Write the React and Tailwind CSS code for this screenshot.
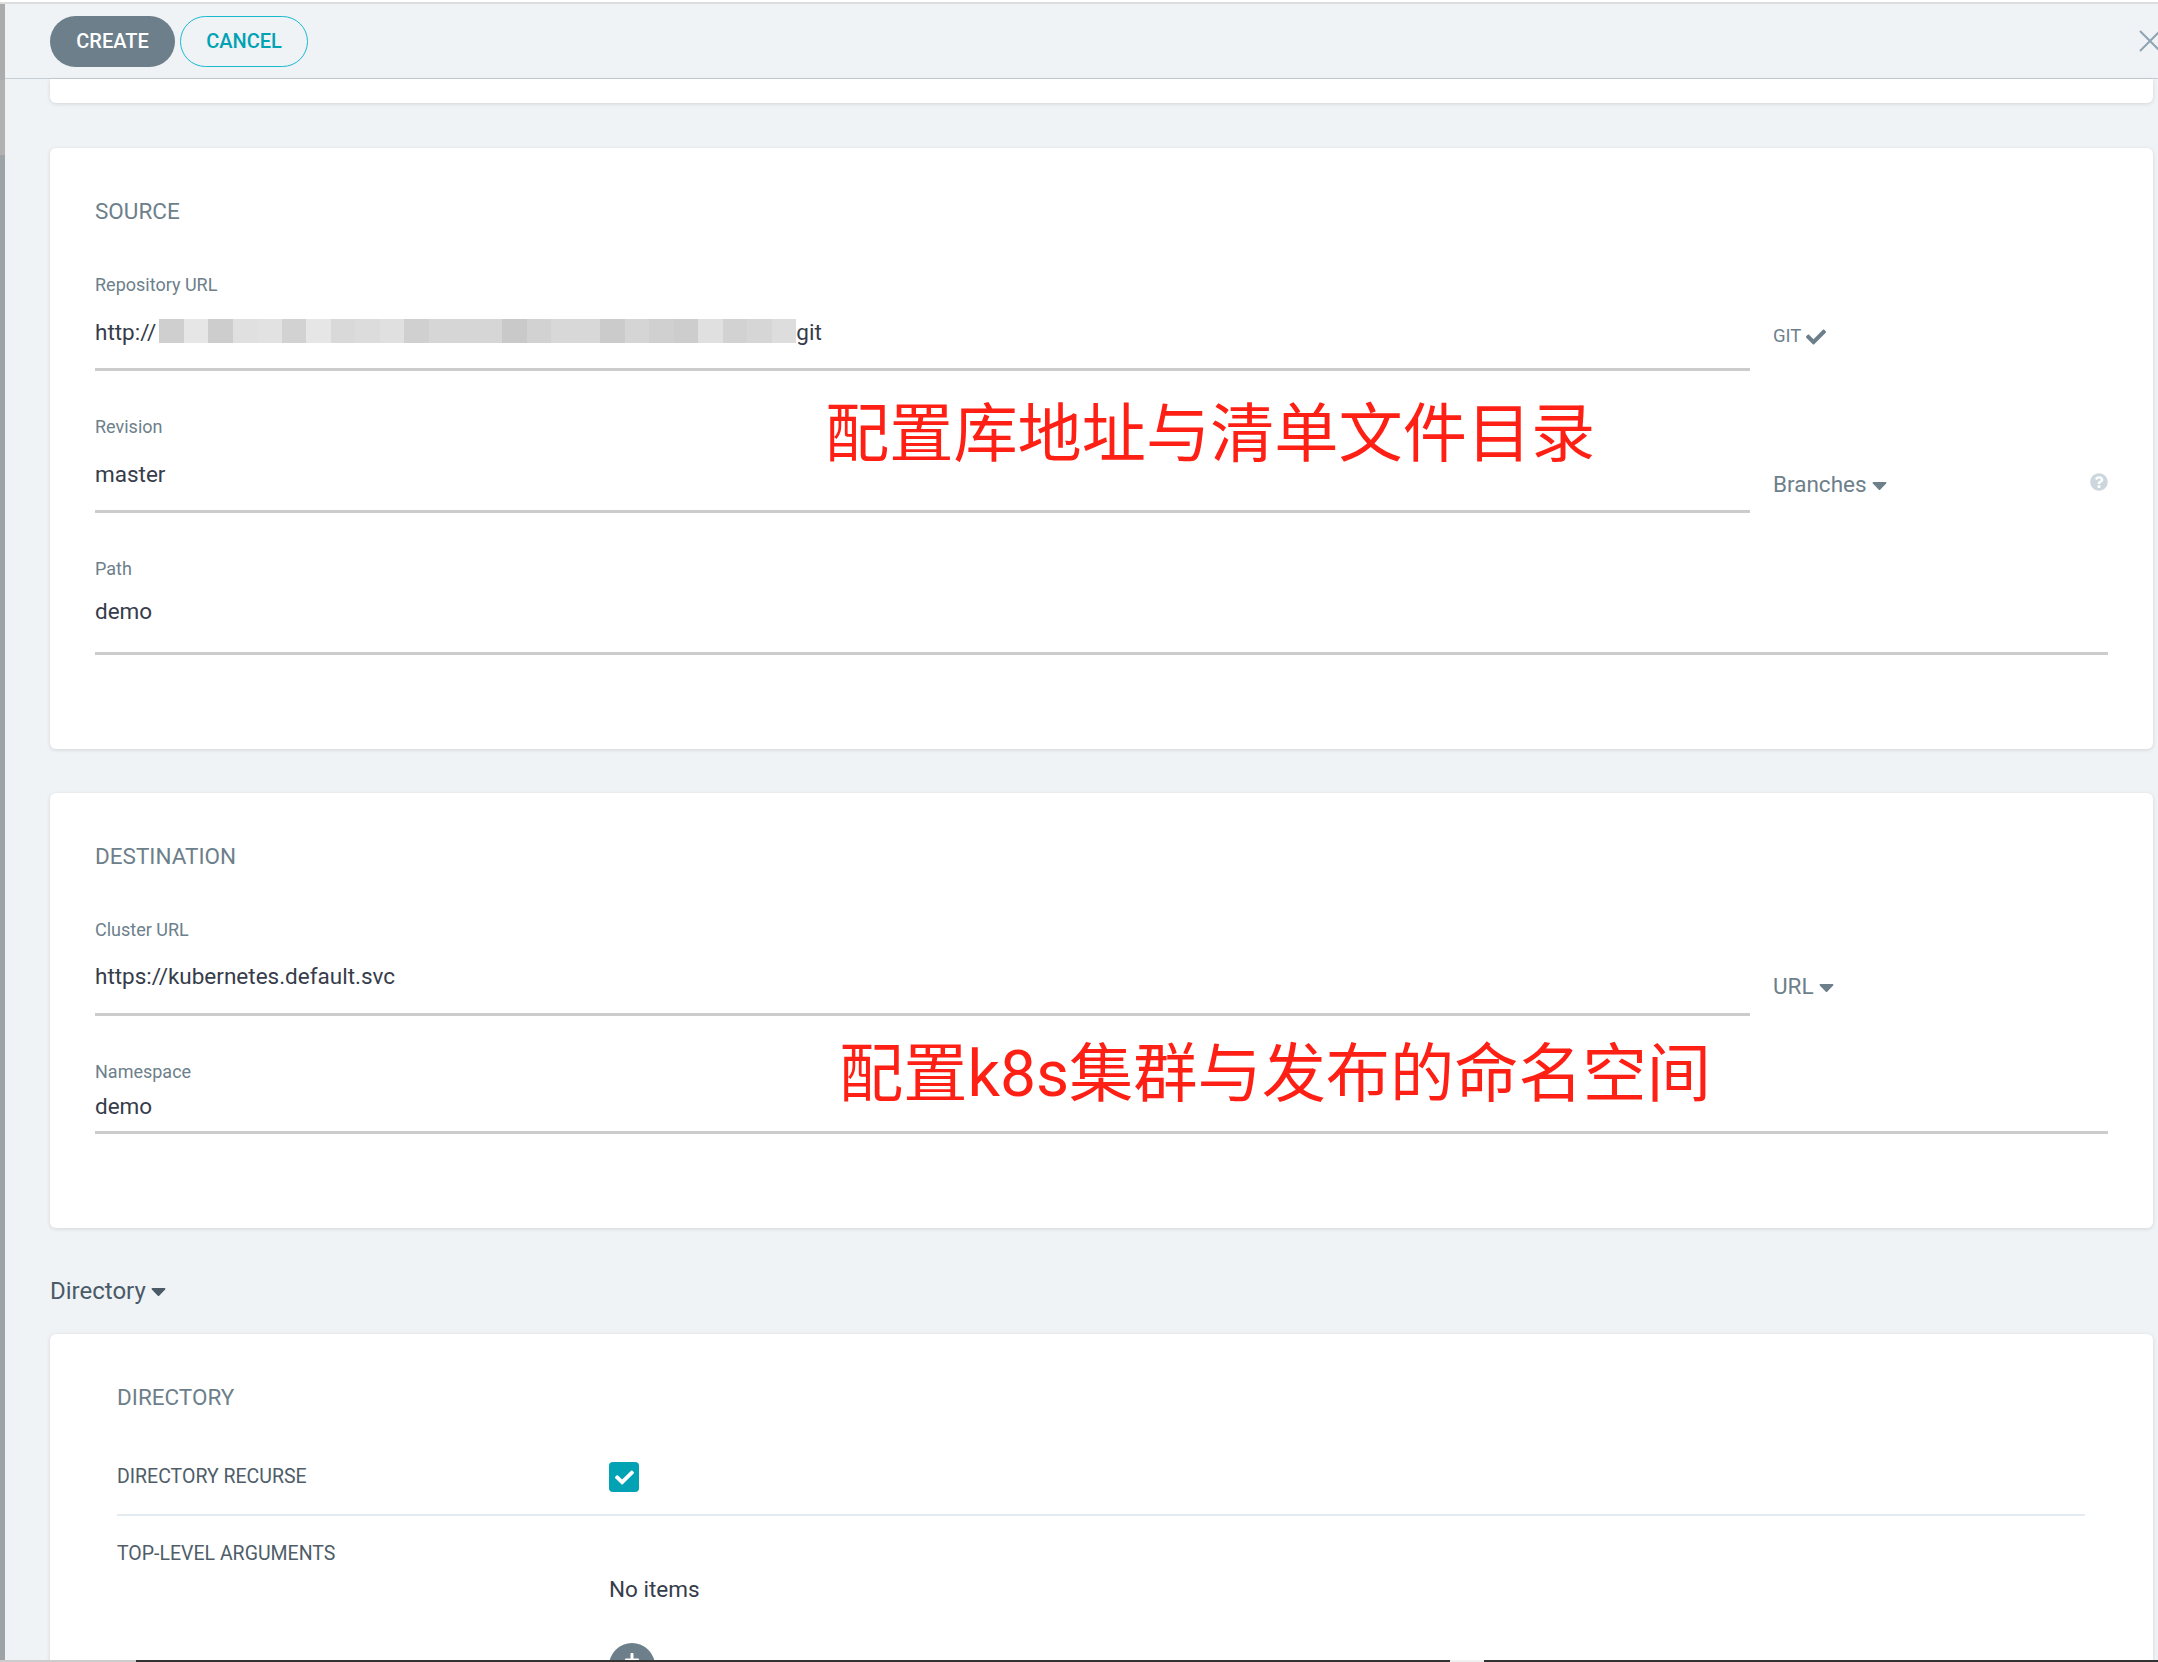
import React from 'react';
import { FaCheck, FaCaretDown, FaQuestionCircle, FaPlus } from 'react-icons/fa';

const smudge = [
  'bg-[#cfcfcf]', 'bg-[#e6e6e6]', 'bg-[#cdcdcd]', 'bg-[#e0e0e0]', 'bg-[#e2e2e2]', 'bg-[#d2d2d2]', 'bg-[#e6e6e6]',
  'bg-[#d9d9d9]', 'bg-[#dcdcdc]', 'bg-[#e0e0e0]', 'bg-[#d0d0d0]', 'bg-[#d6d6d6]', 'bg-[#d6d6d6]', 'bg-[#d6d6d6]',
  'bg-[#c9c9c9]', 'bg-[#d2d2d2]', 'bg-[#d8d8d8]', 'bg-[#d8d8d8]', 'bg-[#cbcbcb]', 'bg-[#d5d5d5]', 'bg-[#d0d0d0]',
  'bg-[#cdcdcd]', 'bg-[#e0e0e0]', 'bg-[#d2d2d2]', 'bg-[#d6d6d6]', 'bg-[#dddddd]',
];

function Field({ label, children, className, gap }) {
  return (
    <div className={`${className} min-w-0 border-b-[3px] border-[#cccccc]`}>
      <div className="text-[18px] leading-[24px] text-[#6d7f8b]">{label}</div>
      <div className={`${gap} text-[22.5px] leading-[30px] text-[#363c4a]`}>{children}</div>
    </div>
  );
}

function Note({ children, className }) {
  return (
    <div className={`absolute whitespace-nowrap text-[64.2px] leading-[72px] font-normal text-[#ff2015] ${className}`}>
      {children}
    </div>
  );
}

function SideLabel({ children, className }) {
  return (
    <div className={`w-[358px] pl-[23px] flex items-center text-[#6d7f8b] ${className}`}>{children}</div>
  );
}

export default function App() {
  return (
    <div className="relative flex h-[1662px] overflow-hidden bg-[#eff3f6] text-[#363c4a] font-['Roboto','Noto_Sans_CJK_SC',sans-serif]">
      {/* sliver of the page behind the panel */}
      <div className="w-[5px] shrink-0 flex flex-col">
        <div className="h-[4px] shrink-0 bg-white border-b-2 border-[#dddddd]" />
        <div className="h-[76px] shrink-0 bg-[#ababab]" />
        <div className="h-[75px] shrink-0 bg-[#b1b1b1]" />
        <div className="flex-1 bg-[#9ea3a7]" />
      </div>

      <div className="relative flex-1 min-w-0 flex flex-col">
        <div className="h-[4px] shrink-0 bg-white border-b-2 border-[#dddddd]" />
        <header className="h-[75px] shrink-0 flex items-center pl-[45px] gap-[5px] border-b border-[#c5ced5]">
          <button className="w-[125px] h-[51px] rounded-full bg-[#6d7f8b] text-white text-[20px] font-medium">CREATE</button>
          <button className="w-[128px] h-[51px] rounded-full border-[1.5px] border-[#17b9cf] text-[#00a2b3] text-[20px] font-medium">CANCEL</button>
          <svg className="ml-auto mr-[-4px] w-[24px] h-[24px] shrink-0" viewBox="0 0 24 24" fill="none" stroke="#8fa4b1" strokeWidth="2">
            <path d="M2 2 L22 22 M22 2 L2 22" />
          </svg>
        </header>

        <div className="flex-1 min-h-0 flex flex-col pl-[45px] pr-[5px]">
          <div className="h-[24px] shrink-0 bg-white rounded-b-[6px] shadow-[0_1px_4px_rgba(0,0,0,0.12)]" />

          {/* source */}
          <section className="relative mt-[45px] h-[601px] shrink-0 bg-white rounded-[6px] shadow-[0_1px_4px_rgba(0,0,0,0.12)] px-[45px] pt-[48px]">
            <h4 className="text-[22.5px] leading-[30px] text-[#6d7f8b]">SOURCE</h4>
            <div className="flex">
              <Field label="Repository URL" className="flex-1 h-[145px] pt-[47px]" gap="mt-[20px]">
                <div className="flex items-center">
                  <span>http://</span>
                  <div className="ml-[3px] flex h-[24px] mt-[-2px]">
                    {smudge.map((c, i) => (
                      <div key={i} className={`w-[24.5px] ${c}`} />
                    ))}
                  </div>
                  <span>git</span>
                </div>
              </Field>
              <SideLabel className="text-[18.5px] pt-[77px] h-[145px]">
                GIT <FaCheck className="ml-[5px] w-[20px] h-[20px]" />
              </SideLabel>
            </div>
            <div className="flex">
              <Field label="Revision" className="flex-1 h-[142px] pt-[44px]" gap="mt-[20px]">master</Field>
              <SideLabel className="text-[22.5px] justify-between h-[142px] pt-[85px]">
                <span className="flex items-center">
                  Branches <FaCaretDown className="ml-[5px] w-[15px] h-[24px]" />
                </span>
                <FaQuestionCircle className="w-[18px] h-[18px] text-[#ccd6dd] mt-[-6px]" />
              </SideLabel>
            </div>
            <Field label="Path" className="h-[142px] pt-[44px]" gap="mt-[15px]">demo</Field>
            <Note className="left-[775px] top-[250px]">配置库地址与清单文件目录</Note>
          </section>

          {/* destination */}
          <section className="relative mt-[44px] h-[435px] shrink-0 bg-white rounded-[6px] shadow-[0_1px_4px_rgba(0,0,0,0.12)] px-[45px] pt-[48px]">
            <h4 className="text-[22.5px] leading-[30px] text-[#6d7f8b]">DESTINATION</h4>
            <div className="flex">
              <Field label="Cluster URL" className="flex-1 h-[145px] pt-[47px]" gap="mt-[19px]">https://kubernetes.default.svc</Field>
              <SideLabel className="text-[22.5px] pt-[87px] h-[145px]">
                URL <FaCaretDown className="ml-[5px] w-[15px] h-[24px]" />
              </SideLabel>
            </div>
            <Field label="Namespace" className="h-[118px] pt-[44px]" gap="mt-[7px]">demo</Field>
            <Note className="left-[789px] top-[245px]">配置k8s集群与发布的命名空间</Note>
          </section>

          <div className="mt-[44px] h-[62px] pb-[24px] shrink-0 flex items-center text-[24px] text-[#4a5a66]">
            Directory <FaCaretDown className="ml-[5px] w-[15px] h-[24px]" />
          </div>

          {/* directory */}
          <section className="flex-1 min-h-0 overflow-hidden bg-white rounded-t-[6px] shadow-[0_1px_4px_rgba(0,0,0,0.12)] pl-[67px] pr-[68px] pt-[48px]">
            <h4 className="text-[22.5px] leading-[30px] text-[#6d7f8b]">DIRECTORY</h4>
            <div className="mt-[33px] h-[71px] flex border-b-2 border-[#e4ebf0]">
              <div className="w-[492px] text-[19.5px] leading-[30px] pt-[17px] text-[#4f5d69]">DIRECTORY RECURSE</div>
              <div className="w-[30px] h-[30px] rounded-[4px] bg-[#00a2b3] flex items-center justify-center mt-[17px]">
                <FaCheck className="w-[19px] h-[19px] text-white" />
              </div>
            </div>
            <div className="flex pt-[23px]">
              <div className="w-[492px] text-[19.5px] leading-[30px] text-[#4f5d69]">TOP-LEVEL ARGUMENTS</div>
              <div className="pt-[35px]">
                <div className="text-[22.5px] leading-[30px]">No items</div>
                <div className="mt-[39px] w-[46px] h-[46px] rounded-full bg-[#6d7f8b] flex items-start justify-center pt-[9px]">
                  <FaPlus className="w-[16px] h-[16px] text-white" />
                </div>
              </div>
            </div>
          </section>
        </div>
      </div>

      {/* bottom edge of the capture */}
      <div className="absolute left-0 top-[1660px] w-[2158px] h-[2px] flex">
        <div className="w-[136px] bg-[#cccccc]" />
        <div className="w-[1314px] bg-[#333333]" />
        <div className="w-[34px] bg-[#f0f0f0]" />
        <div className="flex-1 bg-[#333333]" />
      </div>
    </div>
  );
}
